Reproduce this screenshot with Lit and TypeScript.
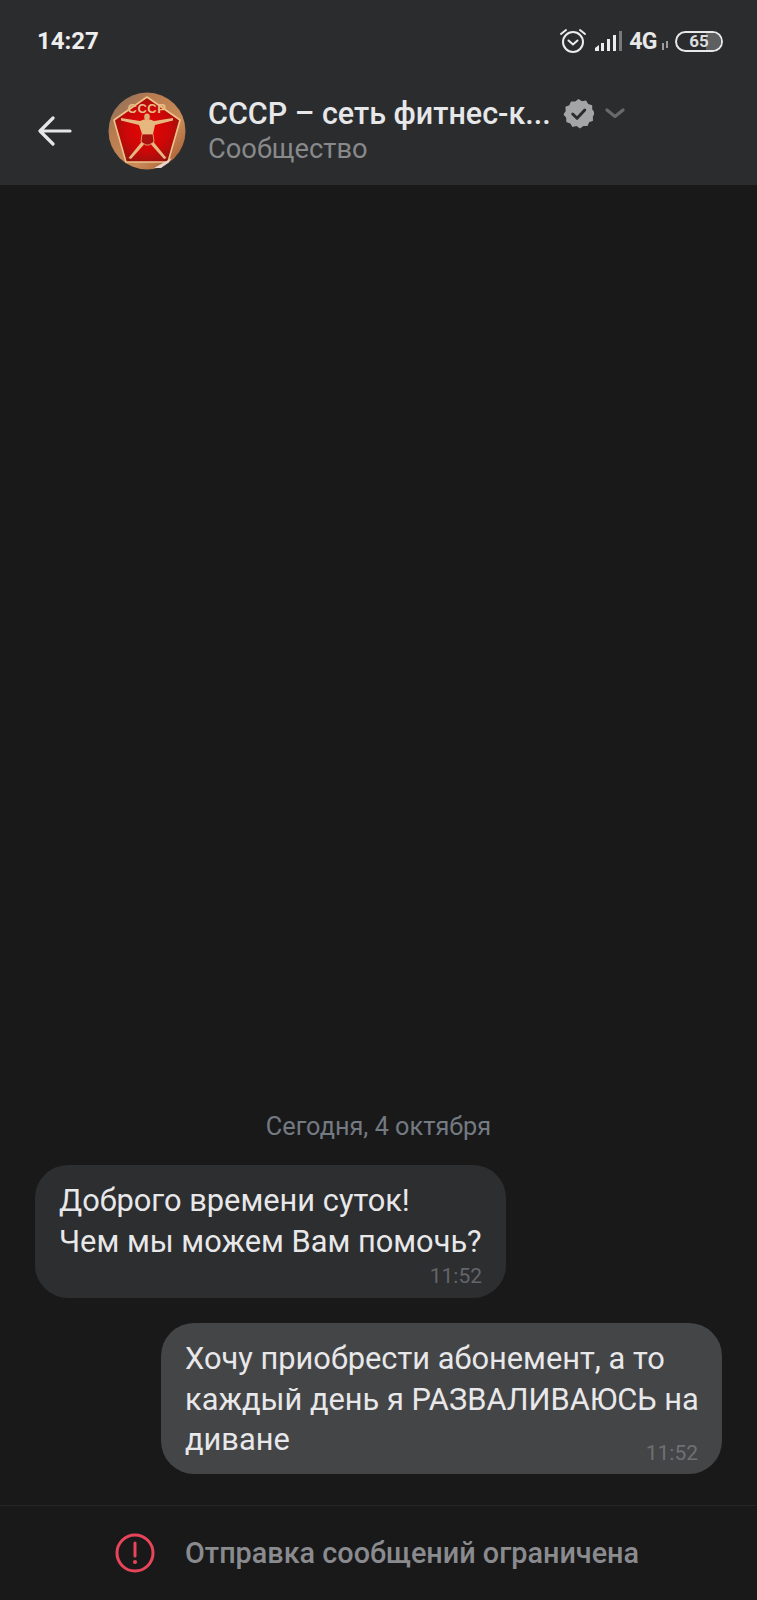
import { LitElement, html, css, svg } from "lit";
import { customElement } from "lit/decorators.js";

const emblem = svg`
<svg class="avatar" width="78" height="78" viewBox="0 0 78 78">
  <defs>
    <radialGradient id="red" cx="50%" cy="50%" r="58%">
      <stop offset="0%" stop-color="#ee0303"/><stop offset="60%" stop-color="#c90808"/><stop offset="100%" stop-color="#8e1410"/>
    </radialGradient>
    <linearGradient id="rim" x1="0" y1="0" x2="1" y2="1">
      <stop offset="0%" stop-color="#7d6c60"/><stop offset="30%" stop-color="#b87c50"/><stop offset="65%" stop-color="#c98c58"/><stop offset="100%" stop-color="#a04e28"/>
    </linearGradient>
  </defs>
  <circle cx="39" cy="39" r="38.500" fill="url(#rim)"/>
  <path d="M39 5 L72 28 L60 70 L18 70 L6 28 Z" fill="url(#red)" stroke="#eec48a" stroke-width="1.600" stroke-linejoin="round"/>
  <text x="39" y="21" text-anchor="middle" class="cccp">СССР</text>
  <path d="M13 26 L32 29 L36 27.500 L42 27.500 L46 29 L65 26 L65 28.500 L47 33 L45 42 L34 42 L31 33 L13 28.500 Z" fill="#e6b880"/>
  <ellipse cx="39" cy="25" rx="2.800" ry="3.400" fill="#dcae76"/>
  <path d="M34 42 H45 L46 50 L41 53 L38 53 L33 50 Z" fill="#a8100d" stroke="#e6b880" stroke-width=".8"/>
  <path d="M33.500 50 L36 52.500 L23 67 L20.500 66 Z M45.500 50 L43 52.500 L56 67 L58.500 66 Z" fill="#e6b880"/>
  <path d="M46 76 L64 66 L60 71 L53 76 Z" fill="#e9d6d0"/>
</svg>`;

@customElement("app-root")
export class AppRoot extends LitElement {
  static styles = css`
    :host { display: block; width: 757px; height: 1600px; overflow: hidden; }
    .page { height: 1600px; display: flex; flex-direction: column; background: #19191a; font-family: Roboto, "Noto Sans", sans-serif; color: #e8e8ea; }
    header { height: 185px; flex: none; background: #2b2c2e; display: flex; flex-direction: column; }
    .status { height: 82px; display: flex; align-items: center; justify-content: space-between; padding: 0 34px 0 37px; }
    .clock { font-size: 24px; font-weight: 700; color: #eeeeee; }
    .icons { display: flex; align-items: center; }
    .net { font-size: 23px; font-weight: 700; color: #e8e8e8; margin-left: 6px; letter-spacing: -0.5px; }
    .batt { margin-left: 6px; width: 48px; height: 21px; box-sizing: border-box; border: 2px solid #e8e8e8; border-radius: 11px; position: relative; display: flex; align-items: center; justify-content: center; font-size: 17px; font-weight: 700; color: #dcdcdc; overflow: hidden; }
    .fill { position: absolute; top: 0; bottom: 0; right: 0; width: 15px; background: #5e5f60; }
    .batt span { position: relative; }
    .nav { flex: 1; display: flex; align-items: center; padding: 0 0 6px 38px; }
    .back { margin-right: 36px; flex: none; }
    .avatar { flex: none; }
    .cccp { font: 700 13px "Liberation Sans", sans-serif; fill: #e8bc84; letter-spacing: .5px; }
    .info { margin-left: 22px; margin-top: -1px; display: flex; flex-direction: column; }
    .title { display: flex; align-items: center; height: 38px; font-size: 30.500px; font-weight: 500; color: #e6e7e9; white-space: nowrap; }
    .verified { margin-left: 12px; }
    .chev { margin-left: 11px; }
    .sub { font-size: 27.300px; color: #88898b; line-height: 34px; }
    main { flex: 1; display: flex; flex-direction: column; justify-content: flex-end; padding: 0 35px 31px; }
    .date { text-align: center; font-size: 25.300px; color: #737a82; line-height: 28px; margin-bottom: 24px; }
    .bubble { border-radius: 33px; box-sizing: border-box; font-size: 30.800px; line-height: 40.500px; white-space: nowrap; }
    .in { width: 471px; height: 133px; background: #2d2e30; padding: 16px 24px 0; margin-bottom: 25px; }
    .in .time { margin-top: 3px; }
    .out { align-self: flex-end; width: 561px; height: 151px; background: #444547; padding: 16px 24px 0; }
    .time { font-size: 21px; line-height: 22px; color: #636568; text-align: right; }
    .row { display: flex; justify-content: space-between; align-items: flex-end; }
    .out .time { color: #6f7073; margin-bottom: -3px; }
    footer { height: 95px; flex: none; border-top: 1px solid #252526; display: flex; align-items: center; padding-left: 115px; box-sizing: border-box; }
    footer span { margin-left: 30px; font-size: 28.800px; font-weight: 500; color: #8a8b8e; }
  `;

  render() {
    return html`<div class="page">
      <header>
        <div class="status">
          <div class="clock">14:27</div>
          <div class="icons">
            <svg width="30" height="28" viewBox="0 0 30 28" fill="none" stroke="#ececec" stroke-width="2" stroke-linecap="round">
              <circle cx="15" cy="15" r="10"/><path d="M10.500 13.500 L15 17.500 L19.500 13.500"/><path d="M3 7 L8 3 M27 7 L22 3"/>
            </svg>
            <svg style="margin-left:6px" width="29" height="22" viewBox="0 0 29 22">
              <path d="M1 21 V18 L5 15 V21 Z M7 21 V13 H10 V21 Z M13 21 V9 H16 V21 Z M19 21 V5 H22 V21 Z" fill="#ececec"/><rect x="25" y="1" width="3" height="20" fill="#77787a"/>
            </svg>
            <div class="net">4G</div>
            <svg style="margin-left:4px;align-self:flex-end;margin-bottom:4px" width="8" height="11" viewBox="0 0 8 11"><path d="M2 10 V3 M6 1 V8" stroke="#b9b9b9" stroke-width="1.600"/></svg>
            <div class="batt"><div class="fill"></div><span>65</span></div>
          </div>
        </div>
        <div class="nav">
          <svg class="back" width="34" height="30" viewBox="0 0 34 30" fill="none" stroke="#e6e6e6" stroke-width="3.200" stroke-linecap="round" stroke-linejoin="round">
            <path d="M32 15 H3 M15 2 L2 15 L15 28"/>
          </svg>
          ${emblem}
          <div class="info">
            <div class="title">СССР – сеть фитнес-к...
              <svg class="verified" width="31" height="31" viewBox="0 0 32 32">
                <path d="M16 1l3.600 2.400 4.200-.8 2.200 3.700 4.100 1.300.1 4.300L33 15.500 30.800 19.200 31 23.500 27 25l-1.700 4-4.300-.2L17.500 31.500 14 29l-4.200.9L7.500 26.200 3.400 24.800 3.300 20.500 0.500 17l2.300-3.600L2.500 9 6.500 7.500 8.300 3.500 12.500 3.700z" fill="#a4a5a7"/>
                <path d="M10 16.500 L14.500 21 L22.500 12.500" fill="none" stroke="#2b2c2e" stroke-width="3" stroke-linecap="round" stroke-linejoin="round"/>
              </svg>
              <svg class="chev" width="20" height="11" viewBox="0 0 20 11"><path d="M2 2 L10 8.500 L18 2" fill="none" stroke="#68696b" stroke-width="3.200" stroke-linecap="round" stroke-linejoin="round"/></svg>
            </div>
            <div class="sub">Сообщество</div>
          </div>
        </div>
      </header>
      <main>
        <div class="date">Сегодня, 4 октября</div>
        <div class="bubble in">Доброго времени суток!<br>Чем мы можем Вам помочь?<div class="time">11:52</div></div>
        <div class="bubble out">Хочу приобрести абонемент, а то<br>каждый день я РАЗВАЛИВАЮСЬ на<div class="row"><div>диване</div><div class="time">11:52</div></div></div>
      </main>
      <footer>
        <svg width="40" height="40" viewBox="0 0 40 40" fill="none" stroke="#e8455a" stroke-width="3"><circle cx="20" cy="20" r="18"/><path d="M20 10 V23" stroke-linecap="round"/><circle cx="20" cy="29" r="1.300" fill="#e8455a" stroke-width="1.500"/></svg>
        <span>Отправка сообщений ограничена</span>
      </footer>
    </div>`;
  }
}
